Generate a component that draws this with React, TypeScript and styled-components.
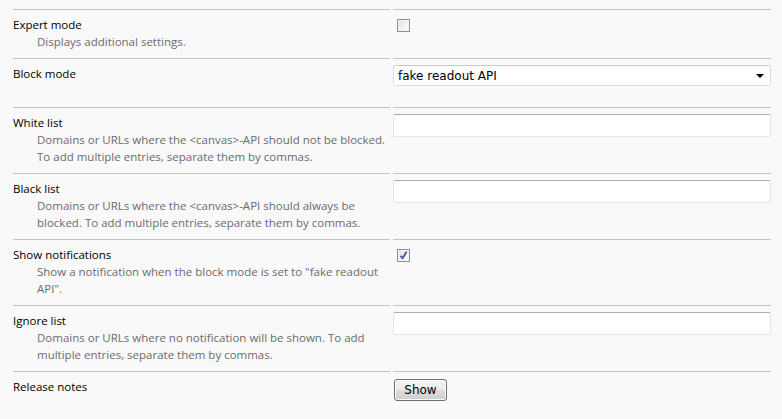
import React from 'react';
import styled, { createGlobalStyle } from 'styled-components';

const GlobalStyle = createGlobalStyle`
  html, body {
    margin: 0;
    padding: 0;
    background: #f9f9f9;
  }
  body {
    font-family: 'Open Sans', 'Noto Sans', sans-serif;
  }
`;

type Setting = {
  label: string;
  description?: string[];
  control: 'checkbox' | 'checked' | 'select' | 'text' | 'button';
};

const SETTINGS: Setting[] = [
  { label: 'Expert mode', description: ['Displays additional settings.'], control: 'checkbox' },
  { label: 'Block mode', description: ['\u00a0'], control: 'select' },
  {
    label: 'White list',
    description: [
      'Domains or URLs where the <canvas>-API should not be blocked.',
      'To add multiple entries, separate them by commas.',
    ],
    control: 'text',
  },
  {
    label: 'Black list',
    description: [
      'Domains or URLs where the <canvas>-API should always be',
      'blocked. To add multiple entries, separate them by commas.',
    ],
    control: 'text',
  },
  {
    label: 'Show notifications',
    description: ['Show a notification when the block mode is set to "fake readout', 'API".'],
    control: 'checked',
  },
  {
    label: 'Ignore list',
    description: ['Domains or URLs where no notification will be shown. To add', 'multiple entries, separate them by commas.'],
    control: 'text',
  },
  { label: 'Release notes', control: 'button' },
];

const Control = ({ type }: { type: Setting['control'] }) => {
  switch (type) {
    case 'checkbox':
      return <CheckBox />;
    case 'checked':
      return (
        <CheckBox>
          <svg width="9" height="9" viewBox="0 0 9 9">
            <path d="M1.5 4.8 L3.6 7.2 L7.6 0.8" fill="none" stroke="#3a55b4" strokeWidth="1.8" />
          </svg>
        </CheckBox>
      );
    case 'select':
      return (
        <SelectBox>
          <span>fake readout API</span>
          <Arrow />
        </SelectBox>
      );
    case 'text':
      return <TextField type="text" />;
    case 'button':
      return <PushButton>Show</PushButton>;
  }
};

const App = () => (
  <>
    <GlobalStyle />
    <Page>
      {SETTINGS.map((s) => (
        <Row key={s.label}>
          <Cell>
            <Label>{s.label}</Label>
            {s.description && (
              <Description>
                {s.description.map((line, i) => (
                  <div key={i}>{line}</div>
                ))}
              </Description>
            )}
          </Cell>
          <Cell>
            <Control type={s.control} />
          </Cell>
        </Row>
      ))}
    </Page>
  </>
);

export default App;

const Page = styled.div`
  padding: 9px 11px 0 13px;
`;

const Row = styled.div`
  display: grid;
  grid-template-columns: 377px 1fr;
  column-gap: 3px;
`;

const Cell = styled.div`
  border-top: 1px solid #c3c3c3;
  padding: 6px 0 8px;
  min-width: 0;
`;

const Label = styled.div`
  font-size: 11.5px;
  line-height: 17px;
  color: #000;
`;

const Description = styled.div`
  padding-left: 24px;
  font-size: 11.5px;
  line-height: 17px;
  color: #6b6b6b;
  white-space: nowrap;
`;

const CheckBox = styled.span`
  display: flex;
  align-items: center;
  justify-content: center;
  width: 11px;
  height: 11px;
  margin: 3px 0 0 4px;
  border: 1px solid #8e8f8f;
  background: linear-gradient(135deg, #dcdcdc 0%, #f4f4f4 60%, #fbfbfb 100%);
  box-shadow: inset 0 0 0 1px #f4f4f4;
`;

const SelectBox = styled.div`
  display: flex;
  align-items: center;
  justify-content: space-between;
  box-sizing: border-box;
  height: 21px;
  padding: 0 6px 0 4px;
  background: #fff;
  border: 1px solid #d9dde4;
  border-top-color: #c8ccd3;
  border-radius: 2px;
  font-family: 'DejaVu Sans', 'Liberation Sans', sans-serif;
  font-size: 12px;
  color: #000;
`;

const Arrow = styled.span`
  width: 0;
  height: 0;
  border-left: 4px solid transparent;
  border-right: 4px solid transparent;
  border-top: 4px solid #000;
`;

const TextField = styled.input`
  display: block;
  box-sizing: border-box;
  width: 100%;
  height: 23px;
  margin: 0;
  background: #fff;
  border: 1px solid #e1e6ec;
  border-top-color: #abadb3;
  border-radius: 2px;
  outline: none;
`;

const PushButton = styled.button`
  display: block;
  box-sizing: border-box;
  width: 53px;
  height: 22px;
  margin: 1px 0 0 1px;
  padding: 0;
  border: 1px solid #707070;
  border-radius: 3px;
  background: linear-gradient(#f2f2f2 0%, #ebebeb 50%, #dddddd 51%, #cfcfcf 100%);
  box-shadow: inset 0 0 0 1px #fcfcfc;
  font-family: 'DejaVu Sans', 'Liberation Sans', sans-serif;
  font-size: 12px;
  color: #000;
`;
